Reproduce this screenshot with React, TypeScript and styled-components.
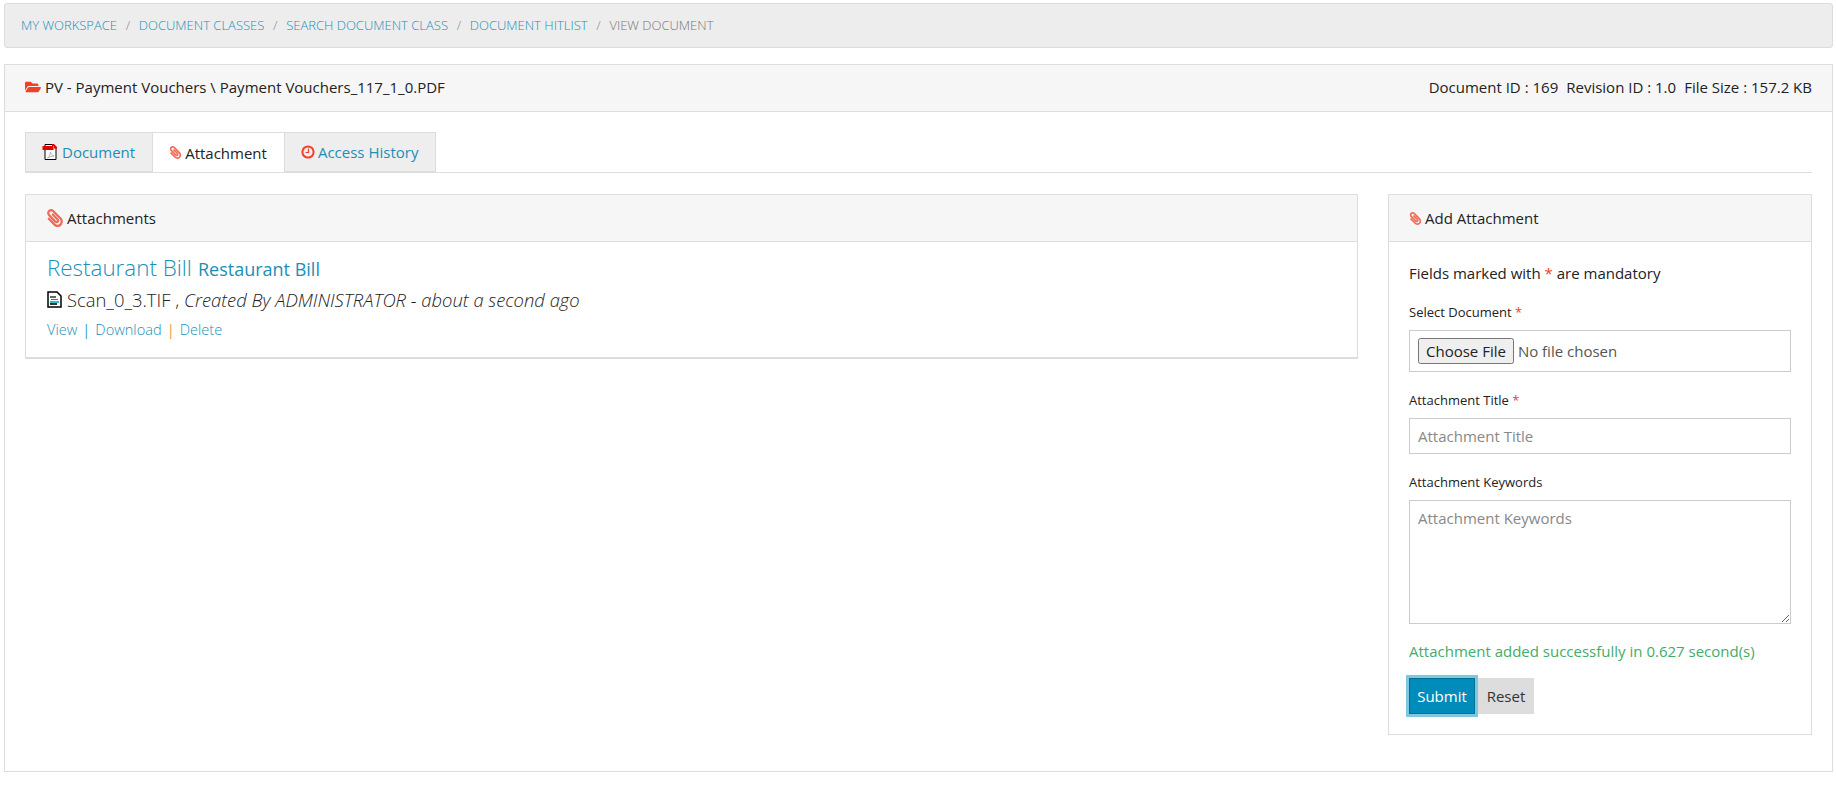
import React from "react";
import styled, { createGlobalStyle } from "styled-components";
import { FaFolderOpen, FaPaperclip } from "react-icons/fa";

const GlobalStyle = createGlobalStyle`
  html, body { margin: 0; padding: 0; background: #fff; }
  body {
    font-family: "Open Sans", sans-serif;
    font-size: 15px;
    color: #222;
  }
  * { box-sizing: border-box; }
`;

const PdfIcon = () => (
  <svg width="17" height="18" viewBox="0 0 16 18">
    <path d="M2.500 1.500h8l3 3v12h-11z" fill="#fff" stroke="#000" />
    <rect x="0" y="3" width="11" height="4" fill="#e30000" />
    <path d="M9.500 1h2l3 3v1.500h-3V3h-2z" fill="#e30000" />
    <path d="M5 15c2-1 2.500-3 3-6 .5 2 1.500 3.500 3.500 4-2 0-4 .8-6.500 2z" fill="none" stroke="#999" strokeWidth=".7" />
  </svg>
);

const ScanIcon = () => (
  <svg width="15" height="17" viewBox="0 0 15 17">
    <path d="M1 1h9l4 4v11H1z" fill="#fff" stroke="#000" strokeWidth="1.500" />
    <path d="M3 5h6v2H3zM4 8h7v1H4z" fill="#666" />
    <path d="M3 10h9v2H3z" fill="#35b5cf" />
    <path d="M3 12h7v2H3z" fill="#333" />
  </svg>
);

const ClockIcon = () => (
  <svg width="14" height="14" viewBox="0 0 14 14">
    <circle cx="7" cy="7" r="5.600" fill="none" stroke="#f04124" strokeWidth="2" />
    <path d="M7.500 3.500v4h-3" fill="none" stroke="#f04124" strokeWidth="1.200" />
  </svg>
);

export default function App() {
  return (
    <Page>
      <GlobalStyle />
      <Breadcrumbs>
        <Crumb href="#">My Workspace</Crumb>
        <Sep>/</Sep>
        <Crumb href="#">Document Classes</Crumb>
        <Sep>/</Sep>
        <Crumb href="#">Search Document Class</Crumb>
        <Sep>/</Sep>
        <Crumb href="#">Document Hitlist</Crumb>
        <Sep>/</Sep>
        <CurrentCrumb>View Document</CurrentCrumb>
      </Breadcrumbs>

      <MainPanel>
        <MainHeading>
          <HeadingTitle>
            <FolderIcon />
            PV - Payment Vouchers \ Payment Vouchers_117_1_0.PDF
          </HeadingTitle>
          <Meta>
            <span>Document ID : 169</span>
            <span>Revision ID : 1.0</span>
            <span>File Size : 157.2 KB</span>
          </Meta>
        </MainHeading>

        <MainBody>
          <Tabs>
            <Tab>
              <PdfIcon />
              <TabLink href="#">Document</TabLink>
            </Tab>
            <Tab $active>
              <SmallClip />
              <span>Attachment</span>
            </Tab>
            <Tab>
              <ClockIcon />
              <TabLink href="#">Access History</TabLink>
            </Tab>
          </Tabs>

          <Columns>
            <ListPanel>
              <PanelHeading>
                <BigClip />
                Attachments
              </PanelHeading>
              <ListBody>
                <TitleLine>
                  <BigTitle href="#">Restaurant Bill</BigTitle>
                  <SubTitle href="#">Restaurant Bill</SubTitle>
                </TitleLine>
                <FileLine>
                  <ScanIcon />
                  <span>Scan_0_3.TIF ,</span>
                  <em>Created By ADMINISTRATOR - about a second ago</em>
                </FileLine>
                <Actions>
                  <a href="#">View</a>
                  <Pipe>|</Pipe>
                  <a href="#">Download</a>
                  <Pipe $orange>|</Pipe>
                  <a href="#">Delete</a>
                </Actions>
              </ListBody>
            </ListPanel>

            <FormPanel>
              <PanelHeading>
                <SmallClip />
                Add Attachment
              </PanelHeading>
              <FormBody>
                <Note>
                  Fields marked with <Req>*</Req> are mandatory
                </Note>
                <Label>
                  Select Document <Req>*</Req>
                </Label>
                <FileBox type="file" />
                <Label>
                  Attachment Title <Req>*</Req>
                </Label>
                <TextInput placeholder="Attachment Title" />
                <Label>Attachment Keywords</Label>
                <TextArea placeholder="Attachment Keywords" />
                <Success>Attachment added successfully in 0.627 second(s)</Success>
                <Buttons>
                  <SubmitButton>Submit</SubmitButton>
                  <ResetButton>Reset</ResetButton>
                </Buttons>
              </FormBody>
            </FormPanel>
          </Columns>
        </MainBody>
      </MainPanel>
    </Page>
  );
}

const Page = styled.div`
  padding: 3px 3px 24px 4px;
  width: 1836px;
`;

const Breadcrumbs = styled.nav`
  display: flex;
  align-items: center;
  height: 45px;
  width: 1829px;
  padding: 0 16px 2px;
  background: #ededed;
  border: 1px solid #dcdcdc;
  border-radius: 3px;
  font-size: 13px;
  font-weight: 300;
  text-transform: uppercase;
`;

const Crumb = styled.a`
  color: #1b8fb8;
  text-decoration: none;
`;

const CurrentCrumb = styled.span`
  color: #777;
`;

const Sep = styled.span`
  color: #888;
  margin: 0 8.700px;
`;

const MainPanel = styled.section`
  margin-top: 16px;
  width: 1829px;
  height: 708px;
  border: 1px solid #ddd;
`;

const MainHeading = styled.header`
  display: flex;
  justify-content: space-between;
  align-items: center;
  height: 47px;
  padding: 0 20px 2px;
  background: #f6f6f6;
  border-bottom: 1px solid #ddd;
`;

const HeadingTitle = styled.div`
  display: flex;
  align-items: center;
  gap: 4px;
`;

const FolderIcon = styled(FaFolderOpen)`
  color: #f04124;
  font-size: 16px;
`;

const Meta = styled.div`
  display: flex;
  gap: 8px;
`;

const MainBody = styled.div`
  padding: 20px 20px 0;
`;

const Tabs = styled.div`
  display: flex;
  height: 41px;
  border-bottom: 1px solid #ddd;
`;

const Tab = styled.div<{ $active?: boolean }>`
  display: flex;
  align-items: center;
  gap: 3px;
  height: 40px;
  padding: 0 17px 0 16px;
  background: ${(p) => (p.$active ? "#fff" : "#eee")};
  border: 1px solid #ddd;
  border-left-width: ${(p) => (p.$active ? "0" : "1px")};
  border-right-width: ${(p) => (p.$active ? "0" : "1px")};
  border-bottom: ${(p) => (p.$active ? "0" : "1px solid #ddd")};
`;

const TabLink = styled.a`
  color: #1b8fb8;
  text-decoration: none;
`;

const SmallClip = styled(FaPaperclip)`
  color: #f26a55;
  font-size: 13px;
  transform: scaleX(-1);
`;

const BigClip = styled(FaPaperclip)`
  color: #f26a55;
  font-size: 18px;
  transform: scaleX(-1);
`;

const Columns = styled.div`
  display: flex;
  align-items: flex-start;
  justify-content: space-between;
  margin-top: 21px;
`;

const ListPanel = styled.div`
  width: 1333px;
  height: 165px;
  border: 2px solid #ddd;
  border-top-width: 1px;
  border-right-width: 1px;
  border-left-width: 1px;
`;

const PanelHeading = styled.div`
  display: flex;
  align-items: center;
  gap: 3px;
  height: 47px;
  padding: 0 20px;
  background: #f6f6f6;
  border-bottom: 1px solid #ddd;
`;

const ListBody = styled.div`
  padding: 10px 21px 0;
`;

const TitleLine = styled.div`
  display: flex;
  align-items: baseline;
  gap: 6px;
  height: 30px;
`;

const BigTitle = styled.a`
  color: #1b8fb8;
  font-size: 22.400px;
  font-weight: 300;
  text-decoration: none;
`;

const SubTitle = styled.a`
  color: #1b8fb8;
  font-size: 18px;
  text-decoration: none;
`;

const FileLine = styled.div`
  display: flex;
  align-items: center;
  gap: 5px;
  height: 30px;
  margin-top: 2px;
  font-size: 18.400px;
  font-weight: 300;

  em {
    font-style: italic;
  }
`;

const Actions = styled.div`
  display: flex;
  gap: 5px;
  margin-top: 5px;
  font-size: 14.600px;
  font-weight: 300;

  a {
    color: #1b8fb8;
    text-decoration: none;
  }
`;

const Pipe = styled.span<{ $orange?: boolean }>`
  color: ${(p) => (p.$orange ? "#e99b3c" : "#2ba6cb")};
  font-weight: 400;
`;

const FormPanel = styled.div`
  width: 424px;
  height: 541px;
  border: 1px solid #ddd;
`;

const FormBody = styled.div`
  padding: 21px 20px 0;
`;

const Note = styled.p`
  margin: 0;
  height: 20px;
  line-height: 20px;
`;

const Req = styled.span`
  color: #f04124;
`;

const Label = styled.label`
  display: block;
  margin-top: 19px;
  margin-bottom: 9px;
  font-size: 13px;
  line-height: 18px;
  color: #222;

  ${Note} + & {
    margin-top: 20px;
  }
`;

const FileBox = styled.input`
  display: block;
  width: 382px;
  height: 42px;
  padding: 7px 8px;
  border: 1px solid #ccc;
  background: #fff;
  font-family: "Open Sans", sans-serif;
  font-size: 15px;
  color: #555;

  &::file-selector-button {
    font-family: "Open Sans", sans-serif;
    font-size: 15px;
    color: #222;
  }
`;

const TextInput = styled.input`
  display: block;
  width: 382px;
  height: 36px;
  padding: 0 8px;
  border: 1px solid #ccc;
  font-family: "Open Sans", sans-serif;
  font-size: 15px;

  &::placeholder {
    color: #888;
  }
`;

const TextArea = styled.textarea`
  display: block;
  width: 382px;
  height: 124px;
  padding: 7px 8px;
  border: 1px solid #ccc;
  font-family: "Open Sans", sans-serif;
  font-size: 15px;

  &::placeholder {
    color: #888;
  }
`;

const Success = styled.p`
  margin: 17px 0 0;
  line-height: 20px;
  color: #43ac6a;
`;

const Buttons = styled.div`
  display: flex;
  gap: 3px;
  margin-top: 17px;
`;

const SubmitButton = styled.button`
  width: 66px;
  height: 36px;
  background: #008cba;
  color: #fff;
  border: 1px solid #007095;
  outline: 3px solid #7fc7e0;
  font-family: "Open Sans", sans-serif;
  font-size: 15px;
`;

const ResetButton = styled.button`
  width: 56px;
  height: 36px;
  background: #ddd;
  color: #333;
  border: 0;
  font-family: "Open Sans", sans-serif;
  font-size: 15px;
`;
